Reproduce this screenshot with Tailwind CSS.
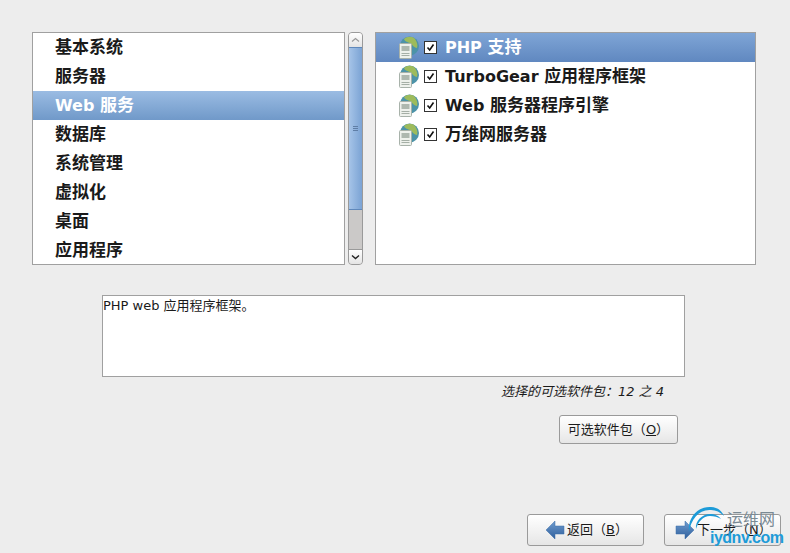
<!DOCTYPE html>
<html lang="en">
<head>
  <meta charset="UTF-8" />
  <title>软件包选择</title>
  <script src="https://cdn.jsdelivr.net/npm/@tailwindcss/browser@4"></script>
</head>
<body class="bg-[#ededed] font-['DejaVu_Sans','Noto_Sans_CJK_SC',sans-serif] text-[#1a1a1a]">
  <div class="relative flex h-[553px] w-[790px] flex-col overflow-hidden">
    <!-- Group and package lists -->
    <div class="flex pl-[32px] pt-[32px]">
      <div class="h-[233px] w-[313px] overflow-hidden border border-[#a0a0a0] bg-white text-[17px] font-bold leading-[29px]">
        <div class="h-[29px] pl-[22px]">基本系统</div>
        <div class="h-[29px] pl-[22px]">服务器</div>
        <div class="h-[29px] bg-gradient-to-b from-[#9bbce3] to-[#7099c9] pl-[22px] text-white"><span class="text-[16px]">Web </span>服务</div>
        <div class="h-[29px] pl-[22px]">数据库</div>
        <div class="h-[29px] pl-[22px]">系统管理</div>
        <div class="h-[29px] pl-[22px]">虚拟化</div>
        <div class="h-[29px] pl-[22px]">桌面</div>
        <div class="h-[29px] pl-[22px]">应用程序</div>
      </div>
      <!-- Scrollbar -->
      <div class="ml-[3px] flex h-[233px] w-[15px] flex-col overflow-hidden rounded-[4px] border border-[#9a9a9a] bg-[#cbc9c8]">
        <div class="flex h-[14px] items-center justify-center bg-gradient-to-b from-white to-[#e4e4e4]">
          <svg width="9" height="6" viewBox="0 0 9 6"><path d="M1 4.500 4.500 1.500 8 4.500" fill="none" stroke="#9a9a9a" stroke-width="1.200"/></svg>
        </div>
        <div class="flex h-[163px] flex-col items-center justify-center gap-[1px] border-y border-[#5f88bb] bg-gradient-to-r from-[#a6c4e8] to-[#7ba3d4]">
          <span class="h-px w-[5px] bg-[#5f7ea6]"></span><span class="h-px w-[5px] bg-[#5f7ea6]"></span><span class="h-px w-[5px] bg-[#5f7ea6]"></span>
        </div>
        <div class="flex-1"></div>
        <div class="flex h-[15px] items-center justify-center border-t border-[#9a9a9a] bg-gradient-to-b from-white to-[#e4e4e4]">
          <svg width="9" height="6" viewBox="0 0 9 6"><path d="M1 1.500 4.500 4.500 8 1.500" fill="none" stroke="#222" stroke-width="1.400"/></svg>
        </div>
      </div>
      <div class="ml-[12px] h-[233px] w-[381px] overflow-hidden border border-[#a0a0a0] bg-white text-[17px] font-bold">
        <div class="flex h-[29px] items-center bg-gradient-to-b from-[#7fa5d6] to-[#6088c0] pl-[22px] text-white">
          <svg width="21" height="23" viewBox="0 0 21 23" class="shrink-0"><circle cx="11.500" cy="10" r="9.500" fill="#4c93a8"/><path d="M6 3c3-3 9-3 11 0 2 3 3 6 2 9-3 0-5-4-7-5-2-1-5-1-6-4z" fill="#9dbb5c"/><rect x="1.500" y="7.500" width="12" height="15" rx="1" fill="#eef1ec" stroke="#a8b2aa"/><rect x="3.500" y="10" width="8" height="5" fill="#aeb8af"/><path d="M3.500 17.500h8M3.500 19.500h8" stroke="#a5afa6"/></svg>
          <span class="ml-[5px] flex h-[13px] w-[13px] shrink-0 items-center justify-center border border-[#333] bg-white"><svg width="9" height="9" viewBox="0 0 9 9"><path d="M1.500 4.500 3.700 7 7.500 1.500" fill="none" stroke="#111" stroke-width="1.600"/></svg></span>
          <span class="ml-[8px] leading-[29px]"><span class="text-[16px]">PHP </span>支持</span>
        </div>
        <div class="flex h-[29px] items-center pl-[22px]">
          <svg width="21" height="23" viewBox="0 0 21 23" class="shrink-0"><circle cx="11.500" cy="10" r="9.500" fill="#4c93a8"/><path d="M6 3c3-3 9-3 11 0 2 3 3 6 2 9-3 0-5-4-7-5-2-1-5-1-6-4z" fill="#9dbb5c"/><rect x="1.500" y="7.500" width="12" height="15" rx="1" fill="#eef1ec" stroke="#a8b2aa"/><rect x="3.500" y="10" width="8" height="5" fill="#aeb8af"/><path d="M3.500 17.500h8M3.500 19.500h8" stroke="#a5afa6"/></svg>
          <span class="ml-[5px] flex h-[13px] w-[13px] shrink-0 items-center justify-center border border-[#333] bg-white"><svg width="9" height="9" viewBox="0 0 9 9"><path d="M1.500 4.500 3.700 7 7.500 1.500" fill="none" stroke="#111" stroke-width="1.600"/></svg></span>
          <span class="ml-[8px] leading-[29px]"><span class="text-[16px]">TurboGear </span>应用程序框架</span>
        </div>
        <div class="flex h-[29px] items-center pl-[22px]">
          <svg width="21" height="23" viewBox="0 0 21 23" class="shrink-0"><circle cx="11.500" cy="10" r="9.500" fill="#4c93a8"/><path d="M6 3c3-3 9-3 11 0 2 3 3 6 2 9-3 0-5-4-7-5-2-1-5-1-6-4z" fill="#9dbb5c"/><rect x="1.500" y="7.500" width="12" height="15" rx="1" fill="#eef1ec" stroke="#a8b2aa"/><rect x="3.500" y="10" width="8" height="5" fill="#aeb8af"/><path d="M3.500 17.500h8M3.500 19.500h8" stroke="#a5afa6"/></svg>
          <span class="ml-[5px] flex h-[13px] w-[13px] shrink-0 items-center justify-center border border-[#333] bg-white"><svg width="9" height="9" viewBox="0 0 9 9"><path d="M1.500 4.500 3.700 7 7.500 1.500" fill="none" stroke="#111" stroke-width="1.600"/></svg></span>
          <span class="ml-[8px] leading-[29px]"><span class="text-[16px]">Web </span>服务器程序引擎</span>
        </div>
        <div class="flex h-[29px] items-center pl-[22px]">
          <svg width="21" height="23" viewBox="0 0 21 23" class="shrink-0"><circle cx="11.500" cy="10" r="9.500" fill="#4c93a8"/><path d="M6 3c3-3 9-3 11 0 2 3 3 6 2 9-3 0-5-4-7-5-2-1-5-1-6-4z" fill="#9dbb5c"/><rect x="1.500" y="7.500" width="12" height="15" rx="1" fill="#eef1ec" stroke="#a8b2aa"/><rect x="3.500" y="10" width="8" height="5" fill="#aeb8af"/><path d="M3.500 17.500h8M3.500 19.500h8" stroke="#a5afa6"/></svg>
          <span class="ml-[5px] flex h-[13px] w-[13px] shrink-0 items-center justify-center border border-[#333] bg-white"><svg width="9" height="9" viewBox="0 0 9 9"><path d="M1.500 4.500 3.700 7 7.500 1.500" fill="none" stroke="#111" stroke-width="1.600"/></svg></span>
          <span class="ml-[8px] leading-[29px]">万维网服务器</span>
        </div>
      </div>
    </div>

    <!-- Description -->
    <div class="ml-[102px] mt-[30px] h-[82px] w-[583px] border border-[#a0a0a0] bg-white text-[13px] leading-[19px]">PHP web 应用程序框架。</div>
    <div class="mt-[6px] w-[664px] text-right text-[13px] italic leading-[18px]">选择的可选软件包：12 之 4</div>
    <div class="mt-[14px] flex w-[678px] justify-end">
      <button class="h-[29px] w-[119px] rounded-[3px] border border-[#9a9a9a] bg-gradient-to-b from-white to-[#e6e6e6] text-[13px]">可选软件包（<u>O</u>）</button>
    </div>

    <!-- Bottom buttons -->
    <div class="mt-[70px] flex justify-end gap-[20px] pr-[9px]">
      <button class="flex h-[32px] w-[117px] items-center rounded-[3px] border border-[#9a9a9a] bg-gradient-to-b from-white to-[#e6e6e6] pl-[17px] text-[13px]">
        <svg width="20" height="20" viewBox="0 0 20 20"><defs><linearGradient id="arrowFill" x1="0" y1="0" x2="0" y2="1"><stop offset="0" stop-color="#6f9ccf"/><stop offset="1" stop-color="#2f5f9c"/></linearGradient></defs><path d="M1 10 10 1v5h9v8h-9v5z" fill="url(#arrowFill)" stroke="#3a6ca8" stroke-width="0.500"/></svg>
        <span class="ml-[2px]">返回（<u>B</u>）</span>
      </button>
      <button class="flex h-[32px] w-[117px] items-center rounded-[3px] border border-[#9a9a9a] bg-gradient-to-b from-white to-[#e6e6e6] pl-[10px] text-[13px]">
        <svg width="20" height="20" viewBox="0 0 20 20"><path d="M19 10 10 1v5H1v8h9v5z" fill="url(#arrowFill)" stroke="#3a6ca8" stroke-width="0.500"/></svg>
        <span class="ml-[2px]">下一步（<u>N</u>）</span>
      </button>
    </div>

    <!-- Watermark over the corner -->
    <div class="absolute left-[684px] top-[505px] h-[48px] w-[106px]">
      <svg width="50" height="36" viewBox="0 0 50 36" class="absolute left-0 top-0"><path d="M5 27C3 13 14 1 27 2c7 .5 11 4 13 9-4-4-8-6-13-6C15 4 7 14 5 27z" fill="#1d9bd8"/><path d="M12 24c-1-8 6-15 14-15 5 0 9 2 11 5-3-2-7-3-11-3-7 0-12 6-14 13z" fill="#1d9bd8"/></svg>
      <span class="absolute left-[43px] top-[6px] text-[16px] leading-[18px] text-[#7a8a94]">运维网</span>
      <span class="absolute left-[26px] top-[23px] font-['Liberation_Sans'] text-[16px] font-bold leading-[20px] tracking-[-0.5px] text-[#1d9bd8]">iydnv.com</span>
    </div>
  </div>
</body>
</html>
